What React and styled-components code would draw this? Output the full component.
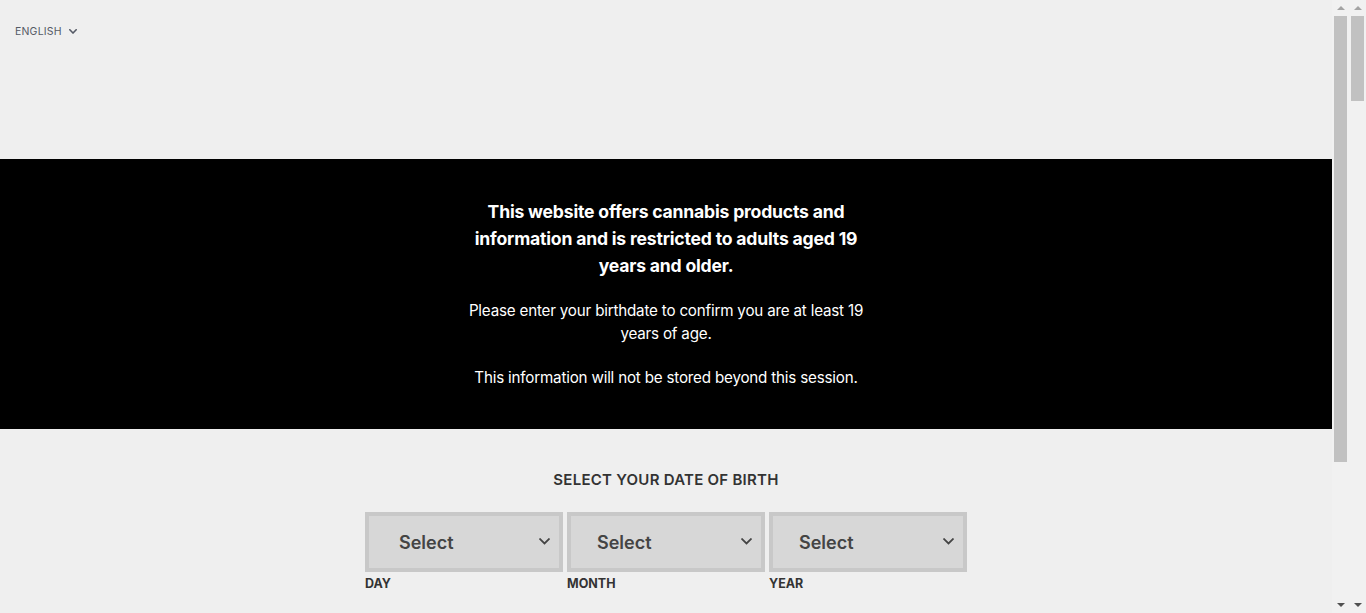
import React from "react";
import styled, { createGlobalStyle } from "styled-components";

const GlobalStyle = createGlobalStyle`
    html, body {
        margin: 0;
        padding: 0;
        background: #efefef;
        font-family: Inter, "Liberation Sans", Arial, sans-serif;
        overflow: hidden;
    }
`;

const Page = styled.div`
    display: flex;
    height: 100vh;
`;
const Main = styled.main`
    flex: 1;
    min-width: 0;
    overflow: hidden;
    background: #efefef;
`;
const Rail = styled.div`
    display: flex;
    width: 34px;
    background: #f1f1f1;
`;
const Track = styled.div`
    width: 17px;
    display: flex;
    flex-direction: column;
    align-items: center;
    padding: 0 2px;
    box-sizing: border-box;
`;
const Arrow = styled.div`
    height: 16px;
    display: flex;
    align-items: center;
    justify-content: center;
    color: ${(p) => (p.$down ? "#505050" : "#a3a3a3")};
`;
const Thumb = styled.div`
    width: 13px;
    height: ${(p) => p.$size}px;
    background: #c1c1c1;
`;
const Spacer = styled.div`
    flex: 1;
`;
const TopBar = styled.div`
    height: 159px;
    padding: 25px 15px 0;
    box-sizing: border-box;
`;
const LangButton = styled.button`
    display: flex;
    align-items: center;
    gap: 7px;
    border: none;
    background: none;
    padding: 0;
    font-family: inherit;
    font-size: 10.5px;
    letter-spacing: 0.2px;
    color: #555a66;
    cursor: pointer;
`;
const Banner = styled.section`
    background: #000;
    color: #fff;
    padding: 39px 0 40px;
    display: flex;
    justify-content: center;
`;
const BannerText = styled.div`
    width: 410px;
    text-align: center;
`;
const Heading = styled.h1`
    margin: 0 0 20px;
    font-size: 17.6px;
    line-height: 27px;
    font-weight: 700;
    letter-spacing: -0.2px;
`;
const Para = styled.p`
    margin: 0 0 21px;
    font-size: 15.2px;
    line-height: 23px;
    font-weight: 400;
    letter-spacing: -0.2px;
    &:last-child {
        margin-bottom: 0;
    }
`;
const Form = styled.section`
    display: flex;
    flex-direction: column;
    align-items: center;
    padding-top: 42px;
`;
const FormTitle = styled.h2`
    margin: 0 0 23px;
    font-size: 15px;
    line-height: 18px;
    font-weight: 600;
    letter-spacing: 0.25px;
    color: #333;
`;
const Fields = styled.div`
    display: grid;
    grid-template-columns: repeat(3, 198px);
    gap: 4px;
`;
const Field = styled.label`
    display: flex;
    flex-direction: column;
`;
const SelectBox = styled.div`
    height: 60px;
    box-sizing: border-box;
    border: 4px solid #c8c8c8;
    background: #d7d7d7;
    display: flex;
    align-items: center;
    justify-content: space-between;
    padding: 0 9px 0 ${(p) => p.$indent}px;
    font-size: 18px;
    font-weight: 600;
    color: #444;
`;
const FieldLabel = styled.span`
    margin-top: 4px;
    font-size: 12.5px;
    font-weight: 700;
    color: #333;
`;

function Chevron({ size = 10, stroke = 2 }) {
    return (
        <svg width={size} height={size * 0.65} viewBox="0 0 10 6.5" fill="none">
            <path d="M1 1l4 4 4-4" stroke="currentColor" strokeWidth={stroke} strokeLinecap="square" />
        </svg>
    );
}

function Triangle({ down }) {
    return (
        <svg width="8" height="4" viewBox="0 0 8 4">
            <path d={down ? "M0 0h8L4 4z" : "M0 4h8L4 0z"} fill="currentColor" />
        </svg>
    );
}

function ScrollTrack({ thumb }) {
    return (
        <Track>
            <Arrow>
                <Triangle />
            </Arrow>
            <Thumb $size={thumb} />
            <Spacer />
            <Arrow $down>
                <Triangle down />
            </Arrow>
        </Track>
    );
}

const fields = [
    { label: "DAY", indent: 30 },
    { label: "MONTH", indent: 26 },
    { label: "YEAR", indent: 26 },
];

export default function App() {
    return (
        <>
            <GlobalStyle />
            <Page>
                <Main>
                    <TopBar>
                        <LangButton>
                            ENGLISH
                            <Chevron size={8} stroke={2} />
                        </LangButton>
                    </TopBar>
                    <Banner>
                        <BannerText>
                            <Heading>
                                This website offers cannabis products and information and is restricted to adults aged 19 years and older.
                            </Heading>
                            <Para>Please enter your birthdate to confirm you are at least 19 years of age.</Para>
                            <Para>This information will not be stored beyond this session.</Para>
                        </BannerText>
                    </Banner>
                    <Form>
                        <FormTitle>SELECT YOUR DATE OF BIRTH</FormTitle>
                        <Fields>
                            {fields.map((f) => (
                                <Field key={f.label}>
                                    <SelectBox $indent={f.indent}>
                                        Select
                                        <Chevron size={11} stroke={1.6} />
                                    </SelectBox>
                                    <FieldLabel>{f.label}</FieldLabel>
                                </Field>
                            ))}
                        </Fields>
                    </Form>
                </Main>
                <Rail>
                    <ScrollTrack thumb={446} />
                    <ScrollTrack thumb={85} />
                </Rail>
            </Page>
        </>
    );
}
